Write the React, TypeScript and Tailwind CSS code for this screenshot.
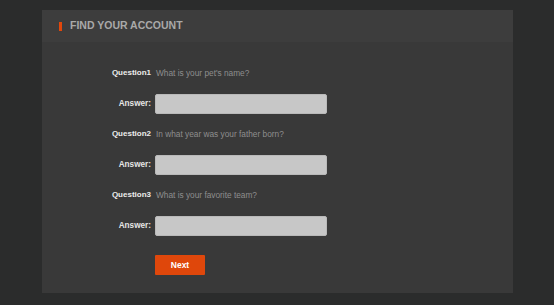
const questions = [
  { label: "Question1", text: "What is your pet's name?" },
  { label: "Question2", text: "In what year was your father born?" },
  { label: "Question3", text: "What is your favorite team?" },
];

function QuestionBlock({ label, text }: { label: string; text: string }) {
  return (
    <div>
      <div className="flex h-5 items-center gap-[5px]">
        <span className="w-[109px] text-right text-[8px] font-bold text-[#ececec]">{label}</span>
        <span className="text-[8.3px] text-[#8e8e8e]">{text}</span>
      </div>
      <div className="mt-[11px] flex h-5 items-center gap-1">
        <span className="w-[109px] text-right text-[8.2px] font-bold text-[#e6e6e6]">Answer:</span>
        <input
          type="text"
          className="h-5 w-[172px] rounded-[2px] border border-[#b9b9b9] bg-[#c7c7c7] outline-none"
        />
      </div>
    </div>
  );
}

export default function App() {
  return (
    <div
      className="h-[305px] w-[554px] bg-[#2b2c2c] px-[42px] pt-[10px]"
      style={{ fontFamily: '"Liberation Sans", Arial, sans-serif' }}
    >
      <div className="h-[283px] w-[471px] bg-[#393939]">
        <div className="flex h-8 items-center gap-2 bg-[#3d3d3d] pl-[17px]">
          <span className="h-[9px] w-[3px] bg-[#e2470b]" />
          <h2 className="text-[10.5px] font-bold text-[#a9a9a9]">FIND YOUR ACCOUNT</h2>
        </div>
        <div className="flex flex-col gap-[10px] pt-[21px]">
          {questions.map((q) => (
            <QuestionBlock key={q.label} label={q.label} text={q.text} />
          ))}
        </div>
        <div className="mt-[15px] pl-[113px]">
          <button
            type="button"
            className="h-5 w-[50px] rounded-[1px] bg-[#df470b] text-[8.5px] font-bold text-white"
          >
            Next
          </button>
        </div>
      </div>
    </div>
  );
}
